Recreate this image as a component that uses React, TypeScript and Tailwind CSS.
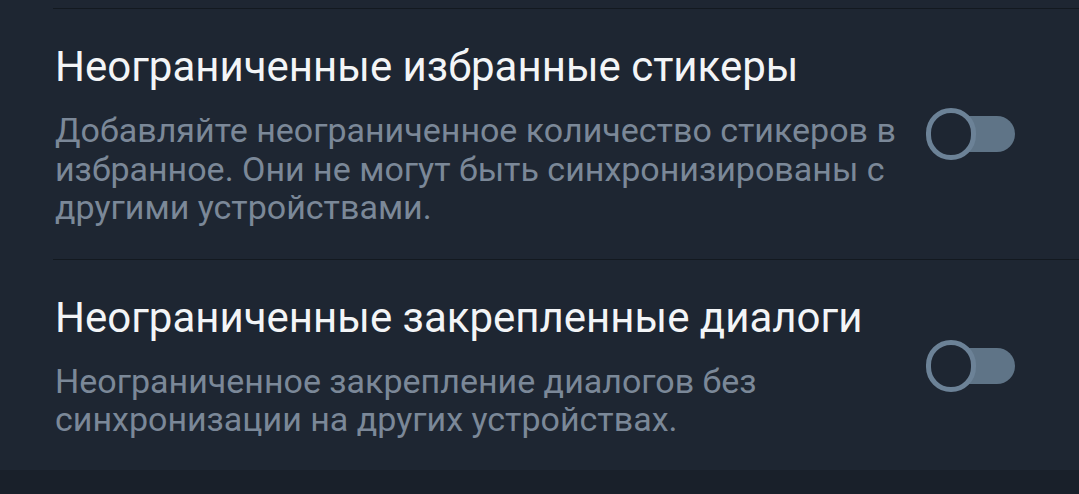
import React from "react";

type Setting = {
  title: string;
  description: string;
};

const settings: Setting[] = [
  {
    title: "Неограниченные избранные стикеры",
    description:
      "Добавляйте неограниченное количество стикеров в избранное. Они не могут быть синхронизированы с другими устройствами.",
  },
  {
    title: "Неограниченные закрепленные диалоги",
    description:
      "Неограниченное закрепление диалогов без синхронизации на других устройствах.",
  },
];

const Toggle = () => (
  <div className="relative h-[52px] w-[89px] shrink-0">
    <div className="absolute right-0 top-[8px] h-[36px] w-[76px] rounded-full bg-[#5f7487]" />
    <div className="absolute left-0 top-0 h-[52px] w-[50px] rounded-full border-[5px] border-[#6c8297] bg-[#1e2632]" />
  </div>
);

const SettingRow = ({ item, last }: { item: Setting; last?: boolean }) => (
  <div className="border-t border-[#131920] ml-[53px]">
    <div className={`flex items-center pt-[33px] ${last ? "pb-[31px]" : "pb-[32px]"}`}>
      <div className="w-[850px] pl-[2px]">
        <div className="text-[42px] leading-[50px] text-[#f3f5f7] mb-[19px]">
          {item.title}
        </div>
        <div className="text-[34px] leading-[38.5px] text-[#7b8898]">
          {item.description}
        </div>
      </div>
      <div className="ml-[23px]">
        <Toggle />
      </div>
    </div>
  </div>
);

export default function App() {
  return (
    <div
      className="w-[1079px] h-[494px] bg-[#19202a] overflow-hidden"
      style={{ fontFamily: "Roboto, 'Noto Sans', sans-serif" }}
    >
      <div className="bg-[#1e2632] pt-[8px]">
        {settings.map((s, i) => (
          <SettingRow key={s.title} item={s} last={i === settings.length - 1} />
        ))}
      </div>
    </div>
  );
}
